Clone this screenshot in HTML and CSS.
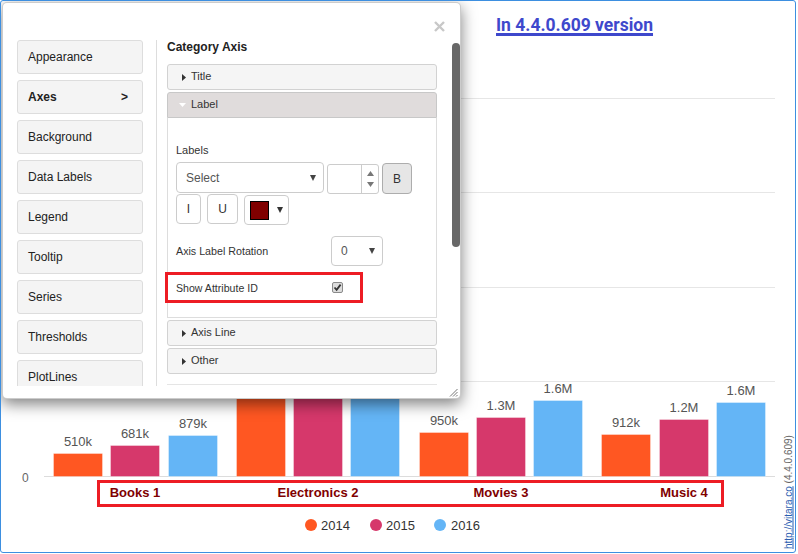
FILE: index.html
```html
<!DOCTYPE html>
<html>
<head>
<meta charset="utf-8">
<title>Chart settings</title>
<link rel="stylesheet" href="styles.css">
</head>
<body>
<div class="frame">
  <div class="title"><a class="title-link">In 4.4.0.609 version</a></div>

  <svg class="chart" width="794" height="511" viewBox="1 41 794 511">
    <g stroke="#e6e6e6" stroke-width="1">
      <line x1="44" x2="775" y1="98.5" y2="98.5"/>
      <line x1="44" x2="775" y1="192.5" y2="192.5"/>
      <line x1="44" x2="775" y1="287.5" y2="287.5"/>
      <line x1="44" x2="775" y1="381.5" y2="381.5"/>
    </g>
    <line x1="44" x2="775" y1="476.5" y2="476.5" stroke="#dcdcdc"/>

    <g stroke="#ffffff" stroke-opacity="0.35" stroke-width="1">
      <rect x="53.5" y="453.5" width="49" height="23" fill="#ff5722"/>
      <rect x="110.5" y="445.5" width="49" height="31" fill="#d6386b"/>
      <rect x="168.5" y="435.5" width="49" height="41" fill="#64b5f6"/>

      <rect x="236.5" y="150.5" width="49" height="326" fill="#ff5722"/>
      <rect x="293.5" y="120.5" width="49" height="356" fill="#d6386b"/>
      <rect x="350.5" y="110.5" width="49" height="366" fill="#64b5f6"/>

      <rect x="419.5" y="432.5" width="49" height="44" fill="#ff5722"/>
      <rect x="476.5" y="417.5" width="49" height="59" fill="#d6386b"/>
      <rect x="533.5" y="400.5" width="49" height="76" fill="#64b5f6"/>

      <rect x="601.5" y="434.5" width="49" height="42" fill="#ff5722"/>
      <rect x="659.5" y="419.5" width="49" height="57" fill="#d6386b"/>
      <rect x="716.5" y="402.5" width="49" height="74" fill="#64b5f6"/>
    </g>

    <g class="val" text-anchor="middle">
      <text x="78" y="446">510k</text>
      <text x="135" y="438">681k</text>
      <text x="193" y="428">879k</text>
      <text x="261" y="143">6.8M</text>
      <text x="318" y="113">7.5M</text>
      <text x="375" y="103">7.7M</text>
      <text x="444" y="425">950k</text>
      <text x="501" y="410">1.3M</text>
      <text x="558" y="393">1.6M</text>
      <text x="626" y="427">912k</text>
      <text x="684" y="412">1.2M</text>
      <text x="741" y="395">1.6M</text>
    </g>

    <text class="axis0" x="22" y="482">0</text>

    <g class="cat" text-anchor="middle">
      <text x="135" y="497">Books 1</text>
      <text x="318" y="497">Electronics 2</text>
      <text x="501" y="497">Movies 3</text>
      <text x="684" y="497">Music 4</text>
    </g>
    <rect x="98.5" y="481.5" width="624" height="24" fill="none" stroke="#ed1c24" stroke-width="3"/>

    <g class="legend">
      <circle cx="311" cy="525" r="6" fill="#ff5722"/>
      <text x="321" y="529.5">2014</text>
      <circle cx="376" cy="525" r="6" fill="#d6386b"/>
      <text x="386" y="529.5">2015</text>
      <circle cx="440" cy="525" r="6" fill="#64b5f6"/>
      <text x="451" y="529.5">2016</text>
    </g>

    <text class="credit" transform="translate(791.5,549) rotate(-90)"><tspan class="credit-link">http://vitara.co</tspan><tspan class="credit-ver"> (4.4.0.609)</tspan></text>
  </svg>

  <div class="dialog">
    <svg class="close" width="11" height="11" viewBox="0 0 11 11"><path d="M1 1 L10 10 M10 1 L1 10" stroke="#c8c8c8" stroke-width="2.4"/></svg>

    <div class="dlg-body">
      <div class="nav">
        <div class="nav-item">Appearance</div>
        <div class="nav-item active"><span>Axes</span><span>&gt;</span></div>
        <div class="nav-item">Background</div>
        <div class="nav-item">Data Labels</div>
        <div class="nav-item">Legend</div>
        <div class="nav-item">Tooltip</div>
        <div class="nav-item">Series</div>
        <div class="nav-item">Thresholds</div>
        <div class="nav-item">PlotLines</div>
      </div>
      <div class="vdiv"></div>
      <div class="panel">
        <div class="panel-title">Category Axis</div>

        <div class="acc-head">
          <svg width="4" height="7" viewBox="0 0 4 7"><path d="M0 0 L4 3.5 L0 7 Z" fill="#333"/></svg>
          <span class="acc-text">Title</span>
        </div>
        <div class="acc-head open">
          <svg width="7" height="4" viewBox="0 0 7 4"><path d="M0 0 L7 0 L3.5 4 Z" fill="#fff"/></svg>
          <span class="acc-text">Label</span>
        </div>
        <div class="acc-body">
          <div class="lbl">Labels</div>
          <div class="row">
            <div class="select sel-font"><span>Select</span><svg width="6" height="6" viewBox="0 0 6 6"><path d="M0 0 L6 0 L3 6 Z" fill="#444"/></svg></div>
            <div class="number">
              <div class="num-field"></div>
              <div class="spin">
                <svg width="7" height="5" viewBox="0 0 7 5"><path d="M0 5 L7 5 L3.5 0 Z" fill="#777"/></svg>
                <svg width="7" height="5" viewBox="0 0 7 5"><path d="M0 0 L7 0 L3.5 5 Z" fill="#777"/></svg>
              </div>
            </div>
            <div class="btn btn-b">B</div>
          </div>
          <div class="row">
            <div class="btn btn-i">I</div>
            <div class="btn btn-u">U</div>
            <div class="color-pick">
              <span class="swatch"></span>
              <svg width="6" height="6" viewBox="0 0 6 6"><path d="M0 0 L6 0 L3 6 Z" fill="#333"/></svg>
            </div>
          </div>
          <div class="row rot-row">
            <span class="rot-label">Axis Label Rotation</span>
            <div class="select sel-rot"><span>0</span><svg width="6" height="6" viewBox="0 0 6 6"><path d="M0 0 L6 0 L3 6 Z" fill="#444"/></svg></div>
          </div>
          <div class="attr-box">
            <span class="attr-label">Show Attribute ID</span>
            <span class="check"><svg width="9" height="9" viewBox="0 0 9 9"><path d="M1.5 4.5 L3.6 6.8 L7.6 1.6" stroke="#333" stroke-width="1.8" fill="none"/></svg></span>
          </div>
        </div>
        <div class="acc-head">
          <svg width="4" height="7" viewBox="0 0 4 7"><path d="M0 0 L4 3.5 L0 7 Z" fill="#333"/></svg>
          <span class="acc-text">Axis Line</span>
        </div>
        <div class="acc-head">
          <svg width="4" height="7" viewBox="0 0 4 7"><path d="M0 0 L4 3.5 L0 7 Z" fill="#333"/></svg>
          <span class="acc-text">Other</span>
        </div>
        <div class="sep"></div>
      </div>
    </div>

    <div class="thumb"></div>
    <svg class="resize" width="9" height="9" viewBox="0 0 9 9">
      <path d="M8.5 1 L1 8.5 M8.5 4 L4 8.5 M8.5 7 L7 8.5" stroke="#777" stroke-width="1"/>
    </svg>
  </div>
</div>
</body>
</html>
```

FILE: styles.css
```css
* { box-sizing: border-box; }

html, body {
  margin: 0;
  background: #fff;
}

body {
  font-family: "Liberation Sans", Arial, sans-serif;
  color: #333;
}

.frame {
  position: relative;
  width: 796px;
  height: 553px;
  border: 1px solid #3d8fe0;
  border-radius: 3px;
  overflow: hidden;
}

.title {
  height: 40px;
  padding: 14px 0 0 495px;
}

.title-link {
  font-family: Roboto, "Liberation Sans", sans-serif;
  font-weight: 700;
  font-size: 17.5px;
  line-height: 20px;
  color: #3e48cc;
  text-decoration: underline;
  text-decoration-thickness: 3px;
  text-underline-offset: 2px;
}

.chart {
  display: block;
}

.chart text {
  font-family: "Liberation Sans", Arial, sans-serif;
}

.val text {
  font-size: 13px;
  fill: #555;
}

.axis0 {
  font-size: 12px;
  fill: #666;
}

.cat text {
  font-size: 13px;
  font-weight: 700;
  fill: #800000;
}

.legend text {
  font-size: 13px;
  fill: #333;
}

.credit {
  font-size: 10px;
}

.credit-link {
  fill: #2a5db0;
  text-decoration: underline;
}

.credit-ver {
  fill: #666;
}

/* dialog */
.dialog {
  position: absolute;
  left: 1px;
  top: 1px;
  width: 459px;
  height: 397px;
  background: #fff;
  border: 1px solid rgba(0, 0, 0, 0.2);
  border-radius: 5px;
  box-shadow: 0 5px 15px rgba(0, 0, 0, 0.5);
  padding: 37px 0 0 14px;
}

.close {
  position: absolute;
  left: 431px;
  top: 18px;
}

.dlg-body {
  display: flex;
  height: 346px;
  overflow: hidden;
}

.nav {
  width: 126px;
  flex: none;
}

.nav-item {
  height: 34px;
  margin-bottom: 6px;
  display: flex;
  align-items: center;
  justify-content: space-between;
  padding: 0 14px 0 10px;
  background: #f4f4f4;
  border: 1px solid #ddd;
  border-radius: 3px;
  font-size: 12px;
  color: #222;
}

.nav-item.active {
  font-weight: 700;
}

.vdiv {
  width: 1px;
  margin-left: 13px;
  background: #ddd;
  flex: none;
}

.panel {
  margin-left: 10px;
  width: 270px;
  flex: none;
}

.panel-title {
  font-size: 12px;
  font-weight: 700;
  line-height: 14px;
  margin-bottom: 10px;
  color: #222;
}

.acc-head {
  height: 26px;
  border: 1px solid #d2d2d2;
  border-radius: 3px;
  background: #f5f5f5;
  display: flex;
  align-items: center;
  padding-left: 14px;
  gap: 5px;
  font-size: 11px;
  color: #333;
  margin-bottom: 2px;
}

.acc-head.open {
  background: #e0dcdc;
  border-color: #c8c8c8;
  border-radius: 3px 3px 0 0;
  margin-bottom: 0;
  padding-left: 11px;
}

.acc-text {
  line-height: 14px;
  padding-bottom: 3px;
}

.acc-body {
  height: 200px;
  border: 1px solid #ddd;
  border-top: 0;
  padding: 25px 0 0 8px;
  margin-bottom: 2px;
}

.lbl {
  font-size: 11px;
  line-height: 14px;
  margin-bottom: 5px;
  color: #333;
}

.row {
  display: flex;
  align-items: flex-start;
}

.select {
  border: 1px solid #ccc;
  border-radius: 4px;
  display: flex;
  align-items: center;
  justify-content: space-between;
  font-size: 12px;
  color: #555;
  background: #fff;
}

.sel-font {
  width: 148px;
  height: 31px;
  padding: 0 7px 0 9px;
}

.number {
  width: 52px;
  height: 30px;
  margin: 2px 0 0 3px;
  border: 1px solid #ccc;
  border-radius: 3px;
  display: flex;
}

.num-field {
  flex: 1;
}

.spin {
  width: 17px;
  border-left: 1px solid #ccc;
  display: flex;
  flex-direction: column;
  align-items: center;
  justify-content: space-between;
  padding: 6px 0 6px;
}

.btn {
  height: 30px;
  border: 1px solid #ccc;
  border-radius: 4px;
  display: flex;
  align-items: center;
  justify-content: center;
  font-size: 12px;
  color: #333;
  background: #fff;
}

.btn-b {
  width: 30px;
  height: 31px;
  margin: 1px 0 0 3px;
  background: #e6e6e6;
  border-color: #adadad;
}

.btn-i {
  width: 25px;
}

.btn-u {
  width: 31px;
  margin-left: 6px;
}

.color-pick {
  width: 45px;
  height: 30px;
  margin: 1px 0 0 6px;
  border: 1px solid #ccc;
  border-radius: 4px;
  display: flex;
  align-items: center;
  padding-left: 5px;
  gap: 8px;
}

.swatch {
  width: 19px;
  height: 19px;
  background: #800000;
  border: 1px solid #000;
}

.rot-row {
  margin-top: 11px;
  align-items: center;
}

.rot-label {
  width: 155px;
  font-size: 10.7px;
  color: #333;
}

.sel-rot {
  width: 52px;
  height: 30px;
  padding: 0 7px 0 9px;
}

.attr-box {
  width: 198px;
  height: 31px;
  margin: 6px 0 0 -11px;
  border: 3px solid #ed1c24;
  padding-left: 8px;
  display: flex;
  align-items: center;
}

.attr-label {
  width: 156px;
  font-size: 10.6px;
  color: #333;
}

.check {
  width: 11px;
  height: 11px;
  border: 1px solid #8a8a8a;
  border-radius: 2px;
  background: #dcdcdc;
  display: flex;
  align-items: center;
  justify-content: center;
}

.sep {
  margin-top: 10px;
  border-top: 1px solid #e5e5e5;
}

.thumb {
  position: absolute;
  left: 449px;
  top: 40px;
  width: 8px;
  height: 204px;
  border-radius: 4px;
  background: #686868;
}

.resize {
  position: absolute;
  right: 2px;
  bottom: 1px;
}
```
